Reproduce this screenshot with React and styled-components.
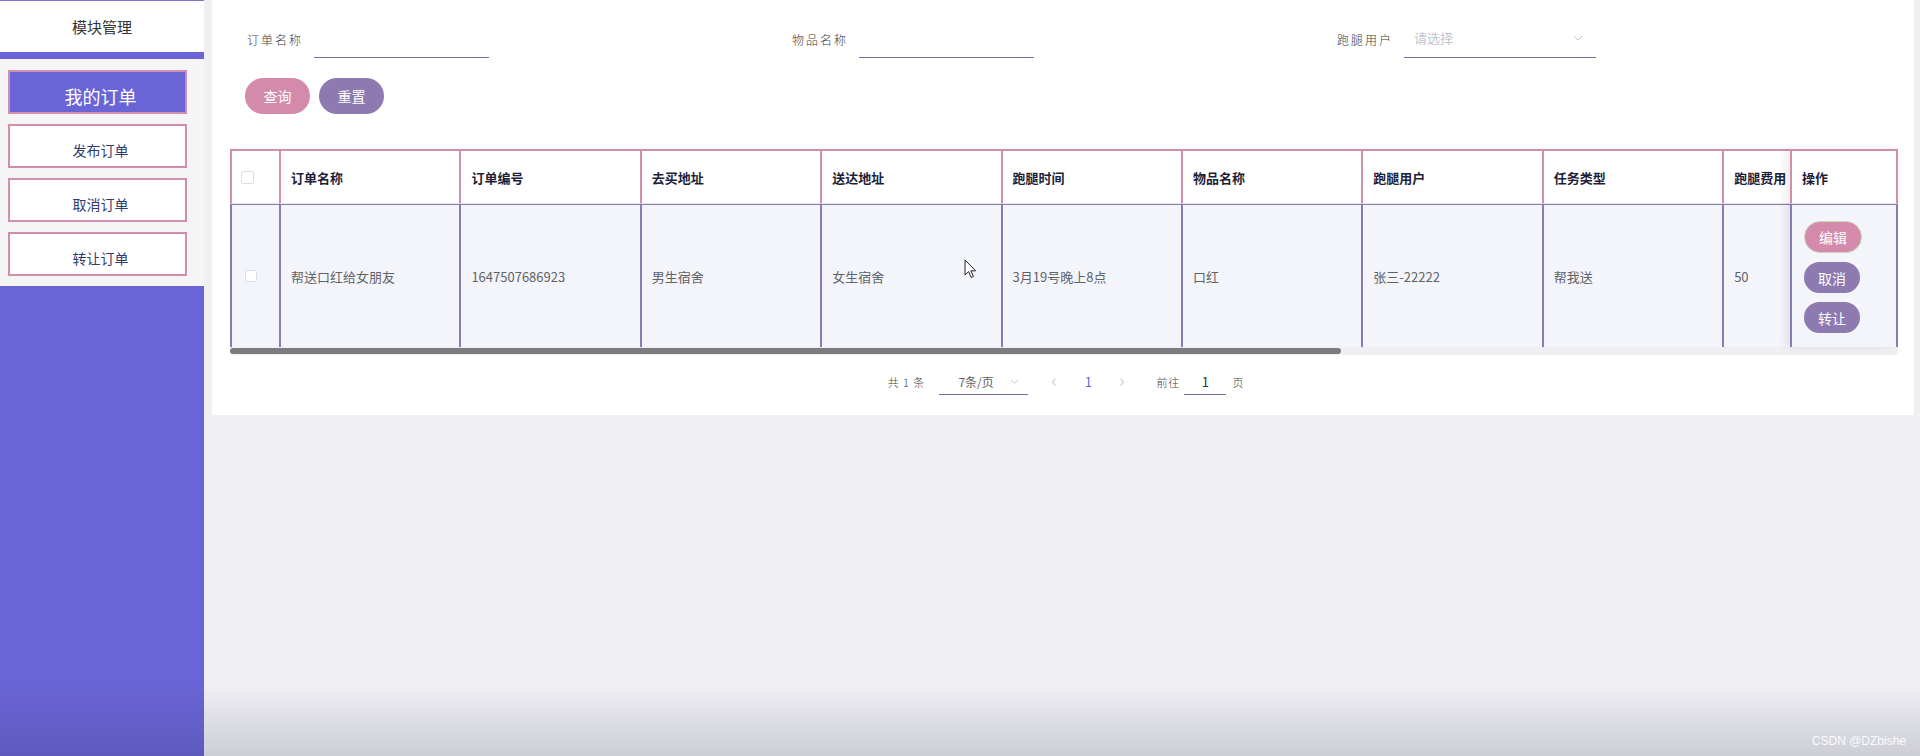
import React from "react";
import styled, { createGlobalStyle } from "styled-components";

const Global = createGlobalStyle`
  html, body { margin: 0; padding: 0; }
  body {
    font-family: "Noto Sans", "Noto Sans CJK SC", sans-serif;
    background: #efeff4;
  }
  * { box-sizing: border-box; }
`;

const PINK = "#d08fae";
const PURPLE = "#8c7ab5";

const Page = styled.div`
  position: relative;
  display: flex;
  width: 1920px;
  height: 756px;
  overflow: hidden;
`;

const Sidebar = styled.aside`
  width: 204px;
  flex: none;
  display: flex;
  flex-direction: column;
  background: #6a65d6;
`;

const SideHeader = styled.div`
  height: 52px;
  background: #fff;
  border-top: 1px solid #7a72d8;
  display: flex;
  align-items: center;
  justify-content: center;
  font-family: "Noto Sans CJK SC", sans-serif;
  font-size: 15px;
  color: #333;
`;

const Menu = styled.nav`
  margin-top: 7px;
  background: #f5f5f5;
  padding: 11px 17px 10px 8px;
  display: flex;
  flex-direction: column;
  gap: 10px;
`;

const MenuItem = styled.div`
  height: 44px;
  border: 2px solid ${PINK};
  background: ${(p) => (p.$active ? "#6a65d6" : "#fff")};
  color: ${(p) => (p.$active ? "#fff" : "#2f3b6f")};
  font-family: "Noto Sans CJK SC", sans-serif;
  font-size: ${(p) => (p.$active ? "18px" : "14px")};
  display: flex;
  align-items: center;
  justify-content: center;
  padding-top: 7px;
  padding-left: 6px;
`;

const Main = styled.main`
  flex: 1;
  padding: 0 6px 0 8px;
  background: #efeff4;
`;

const Card = styled.section`
  background: #fff;
  height: 415px;
  padding: 24px 16px 0 18px;
  display: flex;
  flex-direction: column;
`;

const SearchForm = styled.div`
  display: grid;
  grid-template-columns: 545px 545px 1fr;
  padding-left: 17px;
  height: 34px;
`;

const Field = styled.div`
  display: flex;
  align-items: center;
`;

const Label = styled.span`
  width: 67px;
  flex: none;
  margin-bottom: 4px;
  font-family: "Noto Sans CJK SC", sans-serif;
  font-size: 12px;
  letter-spacing: 2px;
  color: #3a3a3a;
  font-weight: 300;
`;

const TextInput = styled.input`
  width: 175px;
  height: 34px;
  border: none;
  border-bottom: 1px solid #7b6aa9;
  outline: none;
  background: transparent;
  font-size: 13px;
`;

const SelectBox = styled.div`
  width: 192px;
  height: 34px;
  border-bottom: 1px solid #7b6aa9;
  display: flex;
  align-items: center;
  justify-content: space-between;
  padding: 0 12px 6px 10px;
  font-family: "Noto Sans CJK SC", sans-serif;
  font-size: 13px;
  color: #c0c4cc;
`;

const ButtonRow = styled.div`
  margin-top: 20px;
  padding-left: 15px;
  display: flex;
  gap: 9px;
`;

const PillButton = styled.button`
  width: 65px;
  height: 36px;
  border: none;
  border-radius: 18px;
  background: ${(p) => p.$bg};
  color: #fff;
  font-family: "Noto Sans CJK SC", sans-serif;
  font-size: 14px;
  padding: 0;
`;

const TableBox = styled.div`
  margin-top: 35px;
  width: 1668px;
`;

const TableBody = styled.div`
  display: flex;
`;

const ScrollPane = styled.div`
  flex: 1;
  overflow: hidden;
`;

const Row = styled.div`
  display: flex;
  width: max-content;
`;

const HeadCell = styled.div`
  width: ${(p) => p.$w}px;
  flex: none;
  height: 55px;
  border-top: 2px solid ${PINK};
  border-left: 2px solid ${PINK};
  border-right: ${(p) => (p.$last ? `2px solid ${PINK}` : "none")};
  border-bottom: 1px solid #e6e6ee;
  display: flex;
  align-items: center;
  padding-left: ${(p) => p.$pl ?? 10}px;
  font-family: "Noto Sans CJK SC", sans-serif;
  font-size: 13px;
  font-weight: 700;
  color: #1d1f3a;
  white-space: nowrap;
  background: #fff;
`;

const BodyCell = styled.div`
  width: ${(p) => p.$w}px;
  flex: none;
  height: 143px;
  border-top: 1px solid ${PURPLE};
  border-left: 2px solid ${PURPLE};
  border-right: ${(p) => (p.$last ? `2px solid ${PURPLE}` : "none")};
  display: flex;
  align-items: center;
  padding-left: ${(p) => p.$pl ?? 10}px;
  font-family: "Noto Sans CJK SC", sans-serif;
  font-size: 13px;
  color: #606266;
  white-space: nowrap;
  background: #f4f5fa;
`;

const FixedCol = styled.div`
  width: 108px;
  flex: none;
  display: flex;
  flex-direction: column;
  box-shadow: -5px 0 8px rgba(0, 0, 0, 0.07);
  position: relative;
  z-index: 1;
`;

const OpStack = styled.div`
  display: flex;
  flex-direction: column;
  gap: 9px;
  padding-left: 2px;
  margin-top: 2px;
`;

const OpButton = styled.button`
  width: ${(p) => (p.$edit ? 58 : 56)}px;
  height: ${(p) => (p.$edit ? 32 : 31)}px;
  border-radius: 16px;
  border: ${(p) => (p.$edit ? "1px solid #c9d9b4" : "none")};
  background: ${(p) => p.$bg};
  color: #fff;
  font-family: "Noto Sans CJK SC", sans-serif;
  font-size: 14px;
  padding: 0;
`;

const CheckBox = styled.span`
  width: ${(p) => p.$s}px;
  height: ${(p) => p.$s}px;
  border: 1px solid #dcdfe6;
  border-radius: 2px;
  background: #fff;
  display: inline-block;
`;

const ScrollTrack = styled.div`
  height: 8px;
  background: #f0f0f4;
  display: flex;
  align-items: center;
`;

const ScrollThumb = styled.div`
  height: 6px;
  background: #7c7c7e;
  border-radius: 3px;
`;

const Pager = styled.div`
  margin-top: 13px;
  height: 27px;
  display: flex;
  justify-content: center;
  align-items: center;
  padding-left: 4px;
  font-family: "Noto Sans CJK SC", sans-serif;
  color: #606266;
`;

const PagerText = styled.span`
  font-size: 11px;
  letter-spacing: 1px;
  font-weight: 300;
  color: #444;
  margin: ${(p) => p.$m || "0"};
`;

const SizeSelect = styled.div`
  width: 89px;
  height: 27px;
  border-bottom: 1px solid #7b6aa9;
  display: flex;
  align-items: center;
  justify-content: space-between;
  padding: 0 8px 0 19px;
  font-size: 12px;
  color: #606266;
`;

const PageBtn = styled.span`
  width: 34px;
  display: flex;
  justify-content: center;
  font-size: 13px;
  color: ${(p) => (p.$active ? "#5d6bd3" : "#c0c4cc")};
`;

const JumpInput = styled.div`
  width: 42px;
  height: 27px;
  border-bottom: 1px solid #7b6aa9;
  display: flex;
  align-items: center;
  justify-content: center;
  font-size: 13px;
  color: #333;
  margin: 0 6px 0 0;
`;

const Spacer = styled.span`
  width: ${(p) => p.$w}px;
  flex: none;
`;

const BottomShade = styled.div`
  position: absolute;
  left: 0;
  right: 0;
  bottom: 0;
  height: 72px;
  background: linear-gradient(to bottom, rgba(30, 30, 60, 0) 0%, rgba(30, 30, 60, 0.16) 100%);
  pointer-events: none;
`;

const Watermark = styled.div`
  position: absolute;
  right: 14px;
  bottom: 8px;
  font-family: "Liberation Sans", Arial, sans-serif;
  font-size: 12px;
  color: rgba(255, 255, 255, 0.92);
`;

const Cursor = styled.svg`
  position: absolute;
  left: 964px;
  top: 259px;
  pointer-events: none;
`;

const Chevron = ({ size = 12, color = "#c0c4cc" }) => (
  <svg width={size} height={size} viewBox="0 0 12 12" fill="none">
    <path d="M2 4.2 L6 8 L10 4.2" stroke={color} strokeWidth="1" />
  </svg>
);

const SmallArrow = ({ dir }) => (
  <svg width="8" height="10" viewBox="0 0 8 10" fill="none">
    <path d={dir === "left" ? "M5.5 1.5 L2.5 5 L5.5 8.5" : "M2.5 1.5 L5.5 5 L2.5 8.5"} stroke="#c0c4cc" strokeWidth="1.1" />
  </svg>
);

const COL = 180.4;
const columns = [
  { title: "订单名称", value: "帮送口红给女朋友" },
  { title: "订单编号", value: "1647507686923" },
  { title: "去买地址", value: "男生宿舍" },
  { title: "送达地址", value: "女生宿舍" },
  { title: "跑腿时间", value: "3月19号晚上8点" },
  { title: "物品名称", value: "口红" },
  { title: "跑腿用户", value: "张三-22222" },
  { title: "任务类型", value: "帮我送" },
  { title: "跑腿费用", value: "50" },
];

export default function App() {
  return (
    <>
      <Global />
      <Page>
        <Sidebar>
          <SideHeader>模块管理</SideHeader>
          <Menu>
            <MenuItem $active>我的订单</MenuItem>
            <MenuItem>发布订单</MenuItem>
            <MenuItem>取消订单</MenuItem>
            <MenuItem>转让订单</MenuItem>
          </Menu>
        </Sidebar>
        <Main>
          <Card>
            <SearchForm>
              <Field>
                <Label>订单名称</Label>
                <TextInput />
              </Field>
              <Field>
                <Label>物品名称</Label>
                <TextInput />
              </Field>
              <Field>
                <Label>跑腿用户</Label>
                <SelectBox>
                  <span>请选择</span>
                  <Chevron />
                </SelectBox>
              </Field>
            </SearchForm>
            <ButtonRow>
              <PillButton $bg="#d48bab">查询</PillButton>
              <PillButton $bg="#8c7ab0">重置</PillButton>
            </ButtonRow>
            <TableBox>
              <TableBody>
                <ScrollPane>
                  <Row>
                    <HeadCell $w={49} $pl={9}>
                      <CheckBox $s={13} />
                    </HeadCell>
                    {columns.map((c) => (
                      <HeadCell key={c.title} $w={COL}>
                        {c.title}
                      </HeadCell>
                    ))}
                  </Row>
                  <Row>
                    <BodyCell $w={49} $pl={13}>
                      <CheckBox $s={12} />
                    </BodyCell>
                    {columns.map((c) => (
                      <BodyCell key={c.title} $w={COL}>
                        {c.value}
                      </BodyCell>
                    ))}
                  </Row>
                </ScrollPane>
                <FixedCol>
                  <HeadCell $w={108} $last>
                    操作
                  </HeadCell>
                  <BodyCell $w={108} $last $pl={10}>
                    <OpStack>
                      <OpButton $edit $bg="#d48bab">编辑</OpButton>
                      <OpButton $bg="#8c7ab0">取消</OpButton>
                      <OpButton $bg="#8c7ab0">转让</OpButton>
                    </OpStack>
                  </BodyCell>
                </FixedCol>
              </TableBody>
              <ScrollTrack>
                <ScrollThumb style={{ width: "1111px" }} />
              </ScrollTrack>
            </TableBox>
            <Pager>
              <PagerText $m="0 14px 0 0">共 1 条</PagerText>
              <SizeSelect>
                <span>7条/页</span>
                <Chevron size={11} />
              </SizeSelect>
              <Spacer $w={9} />
              <PageBtn>
                <SmallArrow dir="left" />
              </PageBtn>
              <PageBtn $active>1</PageBtn>
              <PageBtn>
                <SmallArrow dir="right" />
              </PageBtn>
              <PagerText $m="0 4px 0 17px">前往</PagerText>
              <JumpInput>1</JumpInput>
              <PagerText>页</PagerText>
            </Pager>
          </Card>
        </Main>
        <BottomShade />
        <Watermark>CSDN @DZbishe</Watermark>
        <Cursor width="13" height="20" viewBox="0 0 13 20">
          <path d="M1 1 L1 16 L4.6 12.6 L7.2 18.5 L9.4 17.5 L6.9 11.8 L11.6 11.8 Z" fill="#fff" stroke="#222" strokeWidth="1" strokeLinejoin="round" />
        </Cursor>
      </Page>
    </>
  );
}
